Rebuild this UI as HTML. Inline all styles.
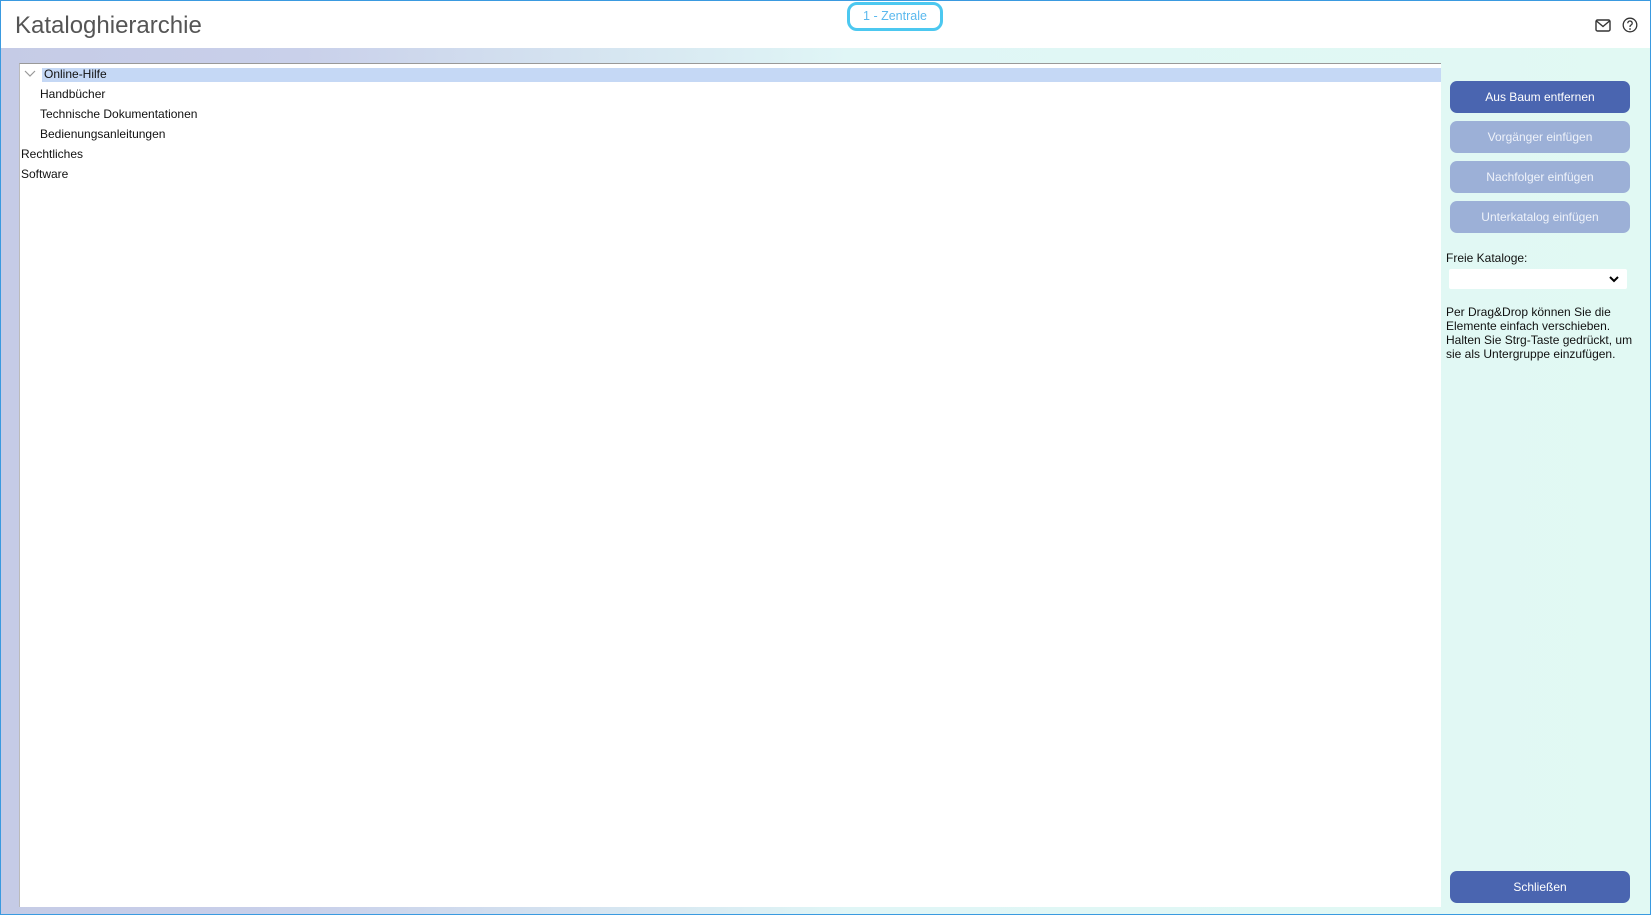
<!DOCTYPE html>
<html><head><meta charset="utf-8"><style>
*{box-sizing:border-box;margin:0;padding:0}
body{width:1651px;height:915px;overflow:hidden;font-family:"Liberation Sans",Arial,sans-serif;background:#fff}
.frame{position:absolute;left:0;top:0;width:1651px;height:915px;border:1px solid #3a9ae0;background:linear-gradient(90deg,#c5cbe6 0,#c9d0ea 300px,#e0f6f6 850px,#e1f9f3 100%)}
.hdr{position:absolute;left:0;top:0;width:1649px;height:47px;background:#fff}
.title{position:absolute;left:14px;top:11px;font-size:24px;color:#555}
.pill{position:absolute;left:846px;top:1px;width:96px;height:29px;border:3px solid #4cc8f0;border-radius:10px;color:#5ab8ee;font-size:12.5px;text-align:center;line-height:23px}
.tree{position:absolute;left:18px;top:62px;width:1422px;height:844px;background:#fff;border-top:1px solid #999;border-left:1px solid #bbb}
.row{position:absolute;font-size:12px;color:#111;height:15px;line-height:15px}
.sel{position:absolute;left:22px;top:4px;width:1399px;height:14px;background:#c5d8f5}
.btn{position:absolute;left:1449px;width:180px;height:32px;border-radius:7px;color:#fff;font-size:12px;text-align:center;line-height:32px}
.on{background:#4a65b0}.off{background:#9cb0d7;color:#eef2fa}
.lbl{position:absolute;left:1445px;font-size:12px;color:#111}
.sel2{position:absolute;left:1448px;top:268px;width:178px;height:20px;background:#fff;border-radius:2px}
</style></head><body>
<div class="frame">
<div class="hdr">
<div class="title">Kataloghierarchie</div>
<div class="pill">1 - Zentrale</div>
<svg style="position:absolute;left:1594px;top:18px" width="16" height="13" viewBox="0 0 16 13"><rect x="1" y="1" width="14" height="11" rx="1.5" fill="none" stroke="#333" stroke-width="1.4"/><path d="M1.5 2 L8 7.5 L14.5 2" fill="none" stroke="#333" stroke-width="1.4"/></svg>
<svg style="position:absolute;left:1621px;top:16px" width="16" height="16" viewBox="0 0 16 16"><circle cx="8" cy="8" r="6.8" fill="none" stroke="#333" stroke-width="1.3"/><path d="M5.8 6.2 A2.2 2.2 0 1 1 8.6 8.3 C8 8.6 8 9 8 10" fill="none" stroke="#333" stroke-width="1.3"/><circle cx="8" cy="12" r=".9" fill="#333"/></svg>
</div>
<div class="tree">
<div class="sel"></div>
<svg style="position:absolute;left:4px;top:6px" width="12" height="8" viewBox="0 0 12 8"><path d="M1 1 L6 6 L11 1" fill="none" stroke="#999" stroke-width="1.2"/></svg>
<div class="row" style="left:24px;top:3px">Online-Hilfe</div>
<div class="row" style="left:20px;top:23px">Handbücher</div>
<div class="row" style="left:20px;top:43px">Technische Dokumentationen</div>
<div class="row" style="left:20px;top:63px">Bedienungsanleitungen</div>
<div class="row" style="left:1px;top:83px">Rechtliches</div>
<div class="row" style="left:1px;top:103px">Software</div>
</div>
<div class="btn on" style="top:80px">Aus Baum entfernen</div>
<div class="btn off" style="top:120px">Vorgänger einfügen</div>
<div class="btn off" style="top:160px">Nachfolger einfügen</div>
<div class="btn off" style="top:200px">Unterkatalog einfügen</div>
<div class="lbl" style="top:250px">Freie Kataloge:</div>
<div class="sel2"><svg style="position:absolute;right:8px;top:7px" width="10" height="7" viewBox="0 0 10 7"><path d="M1 1 L5 5 L9 1" fill="none" stroke="#000" stroke-width="2"/></svg></div>
<div class="lbl" style="top:304px;line-height:14px;width:190px">Per Drag&amp;Drop können Sie die Elemente einfach verschieben. Halten Sie Strg-Taste gedrückt, um sie als Untergruppe einzufügen.</div>
<div class="btn on" style="top:870px">Schließen</div>
</div>
</body></html>
